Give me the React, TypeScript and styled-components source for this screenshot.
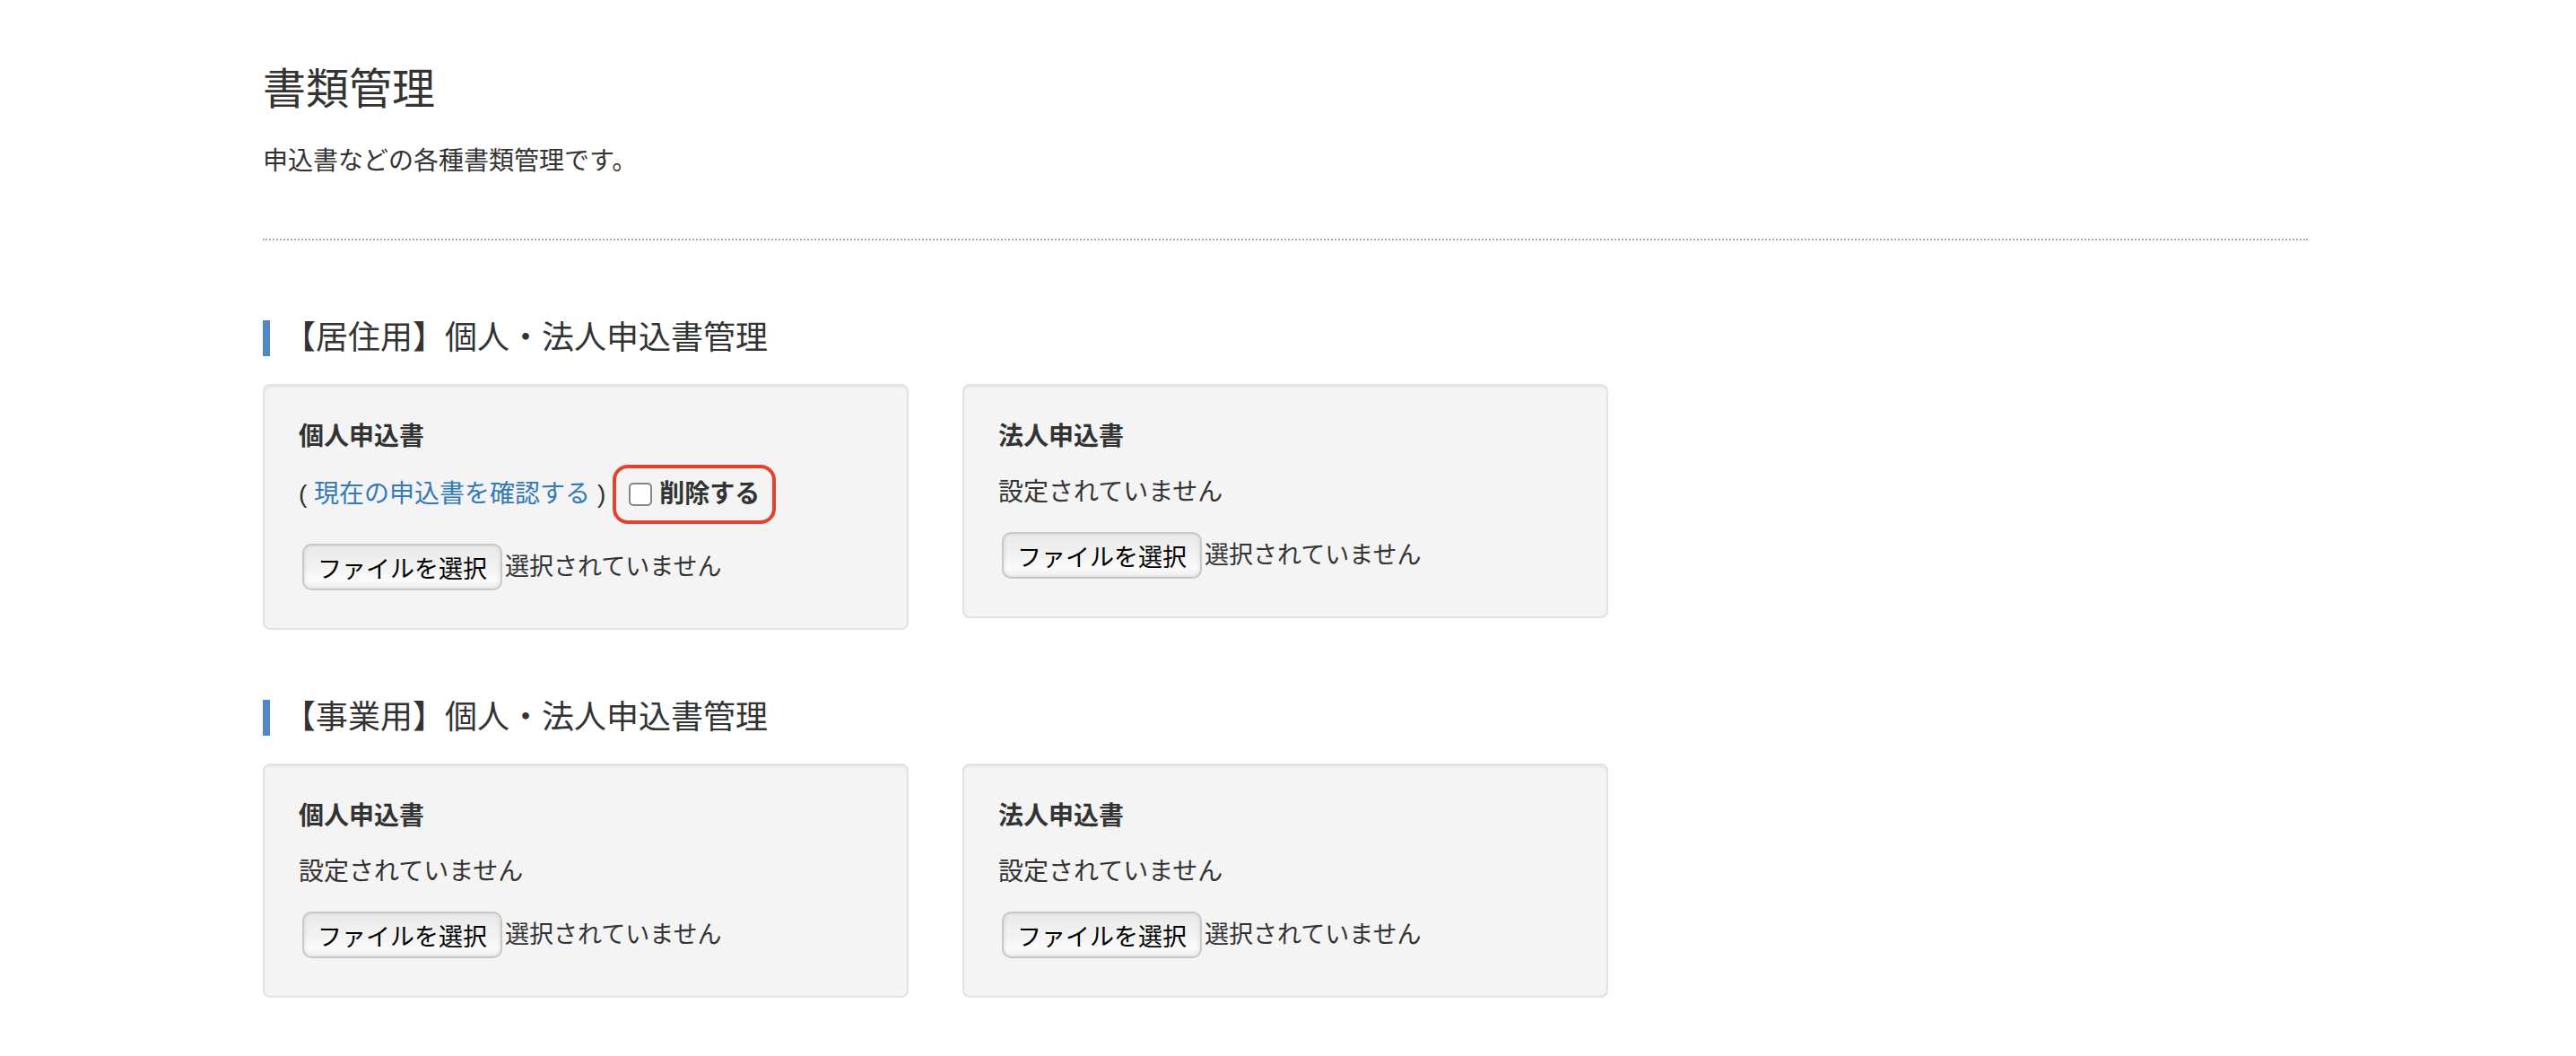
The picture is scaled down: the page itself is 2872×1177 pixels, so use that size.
import React from 'react';
import styled, { createGlobalStyle } from 'styled-components';

const GlobalStyle = createGlobalStyle`
  html, body { margin: 0; padding: 0; background: #ffffff; }
  body {
    font-family: "Liberation Sans", "Noto Sans CJK JP", sans-serif;
    color: #333333;
    font-size: 28px;
    line-height: 40px;
  }
  * { box-sizing: border-box; }
`;

const Page = styled.main`
  width: 2280px;
  margin-left: 293px;
  padding-top: 73px;
  padding-bottom: 60px;
`;

const Title = styled.h1`
  margin: 0;
  font-size: 48px;
  line-height: 53px;
  font-weight: 400;
  color: #333333;
`;

const Lead = styled.p`
  margin: 34px 0 0;
  font-size: 28px;
  line-height: 40px;
`;

const Divider = styled.hr`
  margin: 66px 0 11px;
  height: 0;
  border: 0;
  border-top: 2px dotted #a9a9a9;
`;

const Section = styled.section`
  padding-top: 78px;
`;

const SectionHeading = styled.h2`
  margin: 0;
  font-size: 36px;
  line-height: 40px;
  font-weight: 400;
  color: #333333;
  border-left: 8px solid #5087c7;
  padding-left: 15px;
`;

const CardGrid = styled.div`
  display: grid;
  grid-template-columns: repeat(3, 720px);
  column-gap: 60px;
  align-items: start;
  margin-top: 31px;
`;

const Card = styled.div`
  background: #f4f4f4;
  border: 2px solid #e3e3e3;
  border-radius: 8px;
  box-shadow: inset 0 2px 2px rgba(0, 0, 0, 0.05);
  padding: 37px 38px 42px;
`;

const CardLabel = styled.div`
  font-weight: 700;
  font-size: 28px;
  line-height: 40px;
  margin-bottom: 22px;
`;

const InfoRow = styled.div`
  display: flex;
  align-items: center;
  min-height: 40px;
  margin-bottom: 24px;
  font-size: 28px;
  line-height: 40px;
  white-space: pre;
`;

const CurrentRow = styled(InfoRow)`
  margin-top: -5px;
  margin-bottom: 29px;
`;

const Paren = styled.span`
  color: #333333;
`;

const DocLink = styled.a`
  color: #337ab7;
  text-decoration: none;
`;

const DeleteBox = styled.label`
  display: inline-flex;
  align-items: center;
  gap: 8px;
  height: 66px;
  margin: -6.5px 0 -6.5px 8px;
  padding: 0 14px 0 14px;
  border: 4px solid #e5412d;
  border-radius: 17px;
  font-weight: 700;
`;

const Check = styled.input`
  appearance: none;
  -webkit-appearance: none;
  width: 26px;
  height: 26px;
  margin: 0;
  border: 2px solid #858585;
  border-radius: 5px;
  background: #ffffff;
`;

const FileRow = styled.div`
  display: flex;
  align-items: center;
  gap: 3px;
  padding-left: 4px;
`;

const FileButton = styled.button`
  height: 52px;
  padding: 0 15px;
  font-family: "Liberation Sans", "Noto Sans CJK JP", sans-serif;
  font-size: 27px;
  color: #000000;
  border: 2px solid #c9c9c9;
  border-radius: 10px;
  background: linear-gradient(to bottom, #e9e9e9 0%, #f3f3f3 55%, #fbfbfb 80%, #ededed 100%);
  box-shadow: inset 2px 0 3px rgba(0, 0, 0, 0.06), inset -2px 0 3px rgba(0, 0, 0, 0.06);
  cursor: pointer;
`;

const FileStatus = styled.span`
  font-size: 27px;
  line-height: 40px;
  color: #333333;
`;

type Doc = {
  label: string;
  current?: boolean;
};

const FileInput: React.FC = () => (
  <FileRow>
    <FileButton type="button">ファイルを選択</FileButton>
    <FileStatus>選択されていません</FileStatus>
  </FileRow>
);

const DocCard: React.FC<{ doc: Doc }> = ({ doc }) => (
  <Card>
    <CardLabel>{doc.label}</CardLabel>
    {doc.current ? (
      <CurrentRow>
        <Paren>( </Paren>
        <DocLink href="#">現在の申込書を確認する</DocLink>
        <Paren> )</Paren>
        <DeleteBox>
          <Check type="checkbox" />
          削除する
        </DeleteBox>
      </CurrentRow>
    ) : (
      <InfoRow>設定されていません</InfoRow>
    )}
    <FileInput />
  </Card>
);

const sections: { title: string; docs: Doc[] }[] = [
  {
    title: '【居住用】個人・法人申込書管理',
    docs: [{ label: '個人申込書', current: true }, { label: '法人申込書' }],
  },
  {
    title: '【事業用】個人・法人申込書管理',
    docs: [{ label: '個人申込書' }, { label: '法人申込書' }],
  },
];

export default function App() {
  return (
    <>
      <GlobalStyle />
      <Page>
        <Title>書類管理</Title>
        <Lead>申込書などの各種書類管理です。</Lead>
        <Divider />
        {sections.map((s) => (
          <Section key={s.title}>
            <SectionHeading>{s.title}</SectionHeading>
            <CardGrid>
              {s.docs.map((d) => (
                <DocCard key={d.label} doc={d} />
              ))}
            </CardGrid>
          </Section>
        ))}
      </Page>
    </>
  );
}
